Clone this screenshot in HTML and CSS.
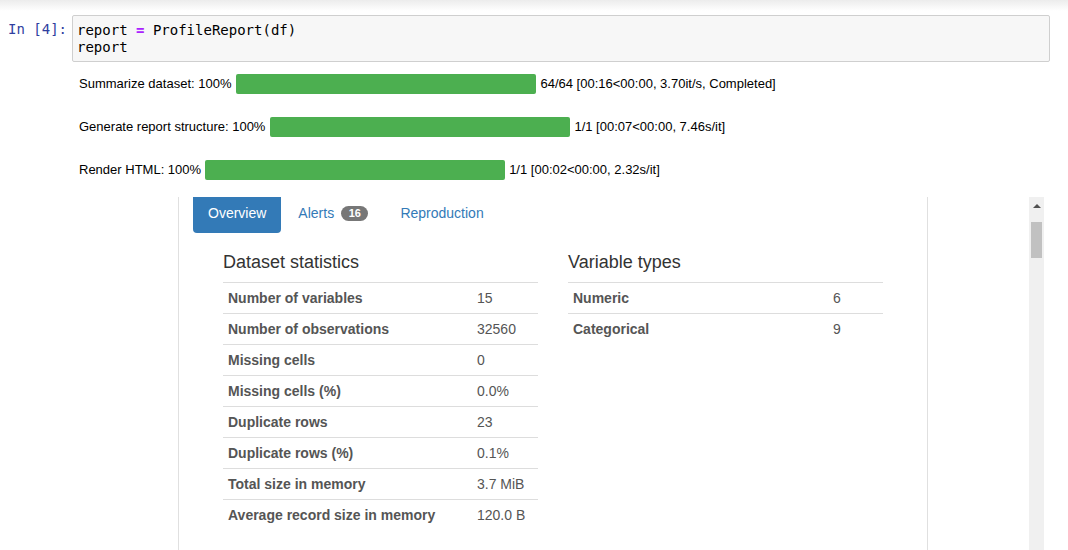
FILE: index.html
```html
<!DOCTYPE html>
<html>
<head>
<meta charset="utf-8">
<link rel="stylesheet" href="styles.css">
</head>
<body>
<div class="cell">
  <div class="prompt">In&nbsp;[4]:</div>
  <div class="input"><pre>report <span class="op">=</span> ProfileReport(df)
report</pre></div>
</div>
<div class="outputs">
  <div class="prow"><span class="plabel">Summarize dataset: 100%</span><div class="bar"></div><span class="pinfo">64/64 [00:16&lt;00:00, 3.70it/s, Completed]</span></div>
  <div class="prow"><span class="plabel">Generate report structure: 100%</span><div class="bar"></div><span class="pinfo">1/1 [00:07&lt;00:00, 7.46s/it]</span></div>
  <div class="prow"><span class="plabel">Render HTML: 100%</span><div class="bar"></div><span class="pinfo">1/1 [00:02&lt;00:00, 2.32s/it]</span></div>
</div>
<div class="frame">
  <div class="report">
    <div class="tabs">
      <div class="tab active">Overview</div>
      <div class="tab">Alerts <span class="badge">16</span></div>
      <div class="tab">Reproduction</div>
    </div>
    <div class="overview">
      <div class="col">
        <div class="h">Dataset statistics</div>
        <table class="stats left">
          <tr><th>Number of variables</th><td>15</td></tr>
          <tr><th>Number of observations</th><td>32560</td></tr>
          <tr><th>Missing cells</th><td>0</td></tr>
          <tr><th>Missing cells (%)</th><td>0.0%</td></tr>
          <tr><th>Duplicate rows</th><td>23</td></tr>
          <tr><th>Duplicate rows (%)</th><td>0.1%</td></tr>
          <tr><th>Total size in memory</th><td>3.7 MiB</td></tr>
          <tr><th>Average record size in memory</th><td>120.0 B</td></tr>
        </table>
      </div>
      <div class="col">
        <div class="h">Variable types</div>
        <table class="stats right">
          <tr><th>Numeric</th><td>6</td></tr>
          <tr><th>Categorical</th><td>9</td></tr>
        </table>
      </div>
    </div>
  </div>
  <div class="spacer"></div>
  <div class="scrollbar">
    <div class="arrow"></div>
    <div class="thumb"></div>
  </div>
</div>
</body>
</html>
```

FILE: styles.css
```css
html, body {
  margin: 0;
  padding: 0;
  height: 550px;
  overflow: hidden;
}
body {
  background: linear-gradient(#ececec, #ffffff 11px) no-repeat;
  background-color: #fff;
  font-family: "Liberation Sans", Arial, sans-serif;
  color: #000;
}
.cell {
  display: flex;
  padding-top: 15px;
}
.prompt {
  width: 72px;
  flex-shrink: 0;
  padding-left: 8px;
  box-sizing: border-box;
  font-family: "DejaVu Sans Mono", monospace;
  font-size: 14px;
  line-height: 17px;
  padding-top: 6px;
  color: #303f9f;
  white-space: nowrap;
}
.input {
  width: 978px;
  flex-shrink: 0;
  height: 47px;
  box-sizing: border-box;
  border: 1px solid #cfcfcf;
  border-radius: 2px;
  background: #f7f7f7;
  padding: 6px 4px 0 4px;
}
.input pre {
  margin: 0;
  font-family: "DejaVu Sans Mono", monospace;
  font-size: 14px;
  line-height: 17px;
  color: #000;
}
.op {
  color: #aa22ff;
  font-weight: bold;
}
.outputs {
  padding: 12px 0 0 79px;
}
.prow {
  display: flex;
  align-items: center;
  height: 20px;
  margin-bottom: 23px;
  font-size: 13px;
  line-height: 18px;
}
.prow:last-child {
  margin-bottom: 17px;
}
.bar {
  width: 300px;
  height: 20px;
  background: #4caf50;
  border-radius: 2px;
  margin: 0 4px 0 4px;
}
.prow:first-child .bar,
.prow:nth-child(2) .bar {
  margin-left: 5px;
}
.frame {
  display: flex;
  margin-left: 178px;
  width: 866px;
  height: 353px;
}
.report {
  width: 750px;
  box-sizing: border-box;
  border-left: 1px solid #e0e0e0;
  border-right: 1px solid #e0e0e0;
  padding: 0 14px;
  font-family: "Liberation Sans", Arial, sans-serif;
  color: #333;
}
.spacer {
  flex: 1;
}
.scrollbar {
  width: 15px;
  background: #f0f0f0;
  position: relative;
}
.arrow {
  position: absolute;
  left: 4px;
  top: 7px;
  width: 0;
  height: 0;
  border-left: 4px solid transparent;
  border-right: 4px solid transparent;
  border-bottom: 4px solid #505050;
}
.thumb {
  position: absolute;
  left: 2px;
  top: 25px;
  width: 11px;
  height: 36px;
  background: #c1c1c1;
}
.tabs {
  display: flex;
  gap: 2px;
  font-size: 14px;
}
.tab {
  padding: 6px 15px 10px 15px;
  line-height: 20px;
  color: #337ab7;
  border-radius: 0 0 4px 4px;
  display: flex;
  align-items: center;
}
.tab.active {
  background: #337ab7;
  color: #fff;
}
.badge {
  display: inline-block;
  margin-left: 7px;
  background: #777;
  color: #fff;
  font-size: 11px;
  font-weight: bold;
  line-height: 11px;
  padding: 2px 7.5px;
  border-radius: 10px;
}
.overview {
  display: flex;
  gap: 30px;
  padding-left: 30px;
}
.col {
  width: 315px;
}
.h {
  font-size: 18px;
  line-height: 20px;
  margin-top: 19px;
  margin-bottom: 10px;
  color: #333;
}
.stats {
  width: 315px;
  border-collapse: collapse;
  font-size: 14px;
  color: #555;
}
.stats th, .stats td {
  border-top: 1px solid #ddd;
  padding: 5px;
  line-height: 20px;
  text-align: left;
}
.stats th {
  font-weight: bold;
}
.stats td {
  font-weight: normal;
}
.left th {
  width: 239px;
}
.right th {
  width: 250px;
}
```
